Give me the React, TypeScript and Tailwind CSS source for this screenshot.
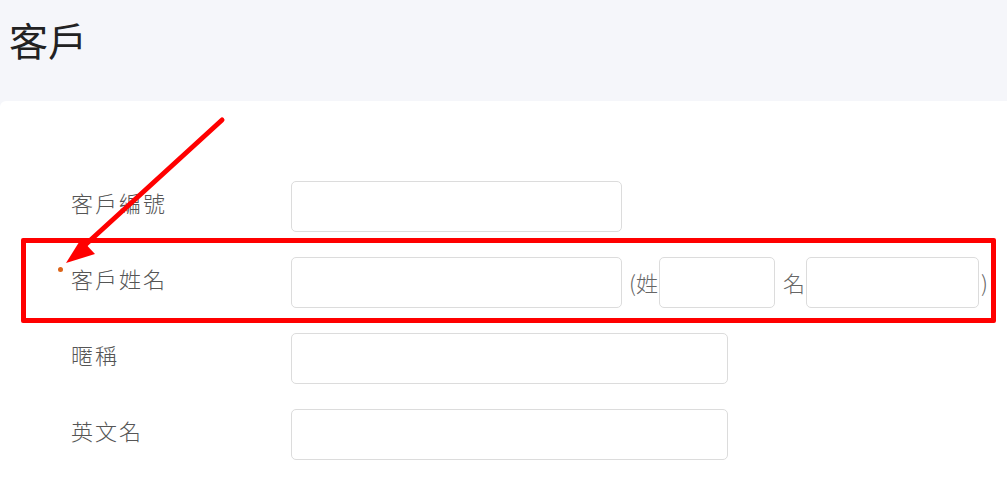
// 客戶表單 — 截圖重現（含紅框標註與箭頭）

const FONT = { fontFamily: '"Noto Sans CJK TC", "Noto Sans", sans-serif' }

function Field({ className = '' }: { className?: string }) {
  return (
    <div className={`h-[51px] rounded-[5px] border border-[#dcdcdc] bg-white ${className}`} />
  )
}

function Label({ text, required = false }: { text: string; required?: boolean }) {
  return (
    <div className="relative w-[220px] shrink-0 -mt-[9px] text-[22px] font-light tracking-[2px] text-[#555]">
      {required && (
        <span className="absolute -left-[13px] top-[5px] w-[5px] h-[5px] rounded-full bg-[#dc6418]" />
      )}
      {text}
    </div>
  )
}

export default function App() {
  return (
    <div className="relative w-[1007px] h-[479px] overflow-hidden bg-[#f5f6fa]" style={FONT}>
      {/* ── 頁首 ── */}
      <div className="h-[101px] pl-[9px] pt-[15px]">
        <h1 className="text-[39px] leading-[48px] font-normal text-[#222]">客戶</h1>
      </div>

      {/* ── 表單卡片 ── */}
      <div className="bg-white rounded-tl-[6px] h-[378px] pl-[71px] pt-[80px] flex flex-col gap-[25px]">
        <div className="flex items-center">
          <Label text="客戶編號" />
          <Field className="w-[331px]" />
        </div>

        <div className="flex items-center">
          <Label text="客戶姓名" required />
          <Field className="w-[331px]" />
          <span className="ml-[7px] text-[22px] font-light text-[#666]">(姓</span>
          <Field className="w-[116px] ml-[1px]" />
          <span className="ml-[8px] text-[22px] font-light text-[#666]">名</span>
          <Field className="w-[173px] ml-[1px]" />
          <span className="ml-[2px] text-[22px] font-light text-[#666]">)</span>
        </div>

        <div className="flex items-center">
          <Label text="暱稱" />
          <Field className="w-[437px]" />
        </div>

        <div className="flex items-center">
          <Label text="英文名" />
          <Field className="w-[437px]" />
        </div>
      </div>

      {/* ── 標註：紅框 ── */}
      <div className="absolute left-[21px] top-[238px] w-[975px] h-[85px] border-[5px] border-[#f00] rounded-[2px] pointer-events-none" />

      {/* ── 標註：箭頭 ── */}
      <svg className="absolute left-0 top-0 pointer-events-none" width="1007" height="479">
        <line x1="222" y1="120" x2="84" y2="246" stroke="#f00" strokeWidth="5" strokeLinecap="round" />
        <polygon points="66,263 81,239 95,254" fill="#f00" />
      </svg>
    </div>
  )
}
